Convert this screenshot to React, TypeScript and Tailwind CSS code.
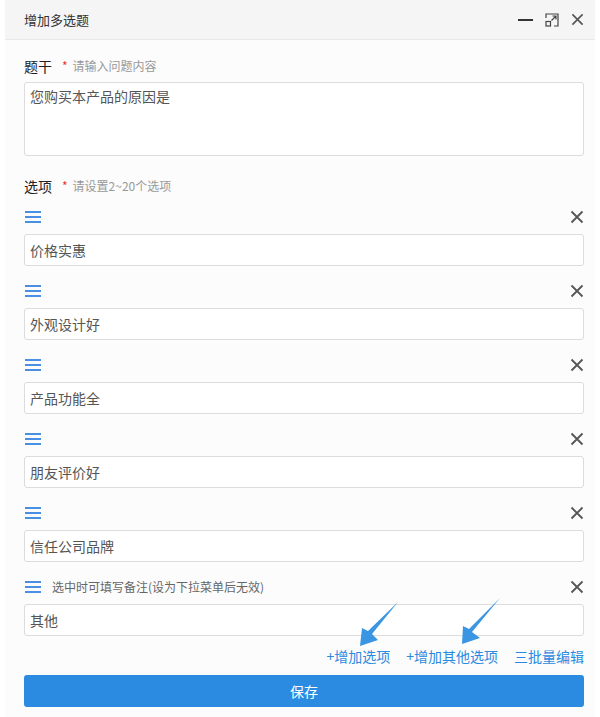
import React from 'react';

const options = ['价格实惠', '外观设计好', '产品功能全', '朋友评价好', '信任公司品牌'];

const DragIcon = () => (
  <svg width="16" height="14" viewBox="0 0 16 14" className="block">
    <rect x="0" y="1" width="16" height="2" fill="#4a90e2" />
    <rect x="0" y="6" width="16" height="2" fill="#4a90e2" />
    <rect x="0" y="11" width="16" height="2" fill="#4a90e2" />
  </svg>
);

const CloseIcon = ({ size = 14 }: { size?: number }) => (
  <svg width={size} height={size} viewBox="0 0 14 14" className="block">
    <path d="M1.5 1.5 L12.5 12.5 M12.5 1.5 L1.5 12.5" stroke="#555" strokeWidth="1.8" fill="none" />
  </svg>
);

const OptionRow = ({ value, note }: { value: string; note?: string }) => (
  <div className="mt-[15px] first:mt-0">
    <div className="flex h-[20px] items-center justify-between pl-[1px]">
      <div className="flex items-center gap-[11px]">
        <DragIcon />
        {note && <span className="text-[12px] text-[#666]">{note}</span>}
      </div>
      <CloseIcon />
    </div>
    <div className="mt-[7px] flex h-[32px] items-center rounded-[3px] border border-[#dcdcdc] bg-white px-[5px] text-[14px] text-[#555]">
      {value}
    </div>
  </div>
);

export default function App() {
  return (
    <div
      className="relative h-[717px] w-[600px] overflow-hidden bg-white"
      style={{ fontFamily: '"Noto Sans CJK SC", "Noto Sans", sans-serif' }}
    >
      <div className="ml-[5px] h-full w-[590px] bg-[#fcfcfc]">
        {/* Header */}
        <div className="flex h-[40px] items-center justify-between border-b border-[#e8e8e8] bg-[#f5f5f5] pl-[19px] pr-[11px]">
          <span className="text-[13px] text-[#333]">增加多选题</span>
          <div className="flex items-center gap-[12px]">
            <svg width="15" height="14" viewBox="0 0 15 14" className="block">
              <rect x="0" y="6" width="15" height="2" fill="#333" />
            </svg>
            <svg width="14" height="14" viewBox="0 0 14 14" className="block">
              <path d="M1 5 V1 H13 V13 H9" stroke="#444" strokeWidth="1.2" fill="none" />
              <rect x="1" y="8.5" width="4.5" height="4.5" stroke="#444" strokeWidth="1.2" fill="none" />
              <path d="M6.5 7.5 L11 3 M7.5 3 H11 V6.5" stroke="#444" strokeWidth="1.2" fill="none" />
            </svg>
            <CloseIcon size={13} />
          </div>
        </div>

        {/* Body */}
        <div className="pl-[19px] pr-[11px] pt-[16px]">
          <div className="flex h-[20px] items-center">
            <span className="text-[14px] text-[#222]">题干</span>
            <span className="ml-[10px] text-[12px] text-[#e33]">*</span>
            <span className="ml-[5px] text-[12px] text-[#999]">请输入问题内容</span>
          </div>
          <div className="mt-[6px] h-[74px] rounded-[3px] border border-[#dcdcdc] bg-white px-[5px] pt-[3px] text-[14px] text-[#555]">
            您购买本产品的原因是
          </div>

          <div className="mt-[20px] flex h-[20px] items-center">
            <span className="text-[14px] text-[#222]">选项</span>
            <span className="ml-[10px] text-[12px] text-[#e33]">*</span>
            <span className="ml-[5px] text-[12px] text-[#999]">请设置2~20个选项</span>
          </div>

          <div className="mt-[11px]">
            {options.map((o) => (
              <OptionRow key={o} value={o} />
            ))}
            <OptionRow value="其他" note="选中时可填写备注(设为下拉菜单后无效)" />
          </div>

          <div className="mt-[10px] flex h-[20px] items-center justify-end gap-[16px] text-[14px] text-[#2a8ae0]">
            <span>+增加选项</span>
            <span>+增加其他选项</span>
            <span>三批量编辑</span>
          </div>

          <div className="mt-[9px] flex h-[32px] items-center justify-center rounded-[3px] bg-[#2a8be0] text-[14px] text-white">
            保存
          </div>
        </div>
      </div>

      {/* Annotation arrows */}
      <svg className="pointer-events-none absolute left-0 top-0" width="600" height="717">
        <polygon points="398,602 372,634 378,640 360,646 362,628 368,631" fill="#3a96e2" />
        <polygon points="500,598 472,632 480,638 462,644 463,626 469,629" fill="#3a96e2" />
      </svg>
    </div>
  );
}
